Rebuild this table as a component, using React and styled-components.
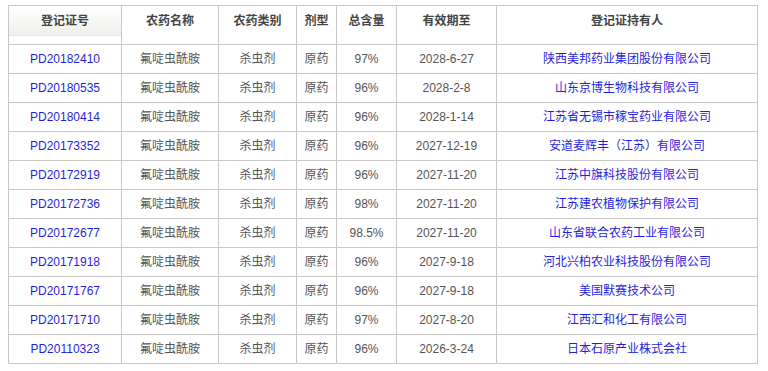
import React from "react";
import styled, { createGlobalStyle } from "styled-components";

const GlobalStyle = createGlobalStyle`
  body {
    margin: 5px 8px;
    background: #fff;
    font-family: "Liberation Sans", Arial, "Noto Sans CJK SC", sans-serif;
    font-size: 12px;
  }
`;

const Table = styled.table`
  border-collapse: collapse;
  width: 750px;
  table-layout: fixed;
  border: 1px solid #c8c8c8;
  color: #555;
`;

const Th = styled.th`
  border: 1px solid #c8c8c8;
  height: 31px;
  padding: 7px 0 0;
  vertical-align: top;
  line-height: 17px;
  font-weight: bold;
  color: #444;
  text-align: center;
  background: ${(p) =>
    p.$shaded
      ? "linear-gradient(#ffffff, #efefeb) 0 0 / 100% 29px no-repeat, linear-gradient(#e6e6e6, #e6e6e6) 0 29px / 100% 1px no-repeat, #fff"
      : "#fff"};
`;

const Td = styled.td`
  border: 1px solid #c8c8c8;
  height: 28px;
  padding: 0;
  text-align: center;
  line-height: 16px;
  color: ${(p) => (p.$link ? "#1f1fe0" : "#555")};
`;

const cols = [113, 97, 78, 40, 60, 100, 261];
const heads = ["登记证号", "农药名称", "农药类别", "剂型", "总含量", "有效期至", "登记证持有人"];

const rows = [
  ["PD20182410", "97%", "2028-6-27", "陕西美邦药业集团股份有限公司"],
  ["PD20180535", "96%", "2028-2-8", "山东京博生物科技有限公司"],
  ["PD20180414", "96%", "2028-1-14", "江苏省无锡市稼宝药业有限公司"],
  ["PD20173352", "96%", "2027-12-19", "安道麦辉丰（江苏）有限公司"],
  ["PD20172919", "96%", "2027-11-20", "江苏中旗科技股份有限公司"],
  ["PD20172736", "98%", "2027-11-20", "江苏建农植物保护有限公司"],
  ["PD20172677", "98.5%", "2027-11-20", "山东省联合农药工业有限公司"],
  ["PD20171918", "96%", "2027-9-18", "河北兴柏农业科技股份有限公司"],
  ["PD20171767", "96%", "2027-9-18", "美国默赛技术公司"],
  ["PD20171710", "97%", "2027-8-20", "江西汇和化工有限公司"],
  ["PD20110323", "96%", "2026-3-24", "日本石原产业株式会社"],
];

export default function App() {
  return (
    <>
      <GlobalStyle />
      <Table>
        <colgroup>
          {cols.map((w, i) => (
            <col key={i} style={{ width: w }} />
          ))}
        </colgroup>
        <thead>
          <tr>
            {heads.map((h, i) => (
              <Th key={h} $shaded={i === 0}>
                {h}
              </Th>
            ))}
          </tr>
        </thead>
        <tbody>
          {rows.map(([id, pct, date, owner]) => (
            <tr key={id}>
              <Td $link>{id}</Td>
              <Td>氟啶虫酰胺</Td>
              <Td>杀虫剂</Td>
              <Td>原药</Td>
              <Td>{pct}</Td>
              <Td>{date}</Td>
              <Td $link>{owner}</Td>
            </tr>
          ))}
        </tbody>
      </Table>
    </>
  );
}
